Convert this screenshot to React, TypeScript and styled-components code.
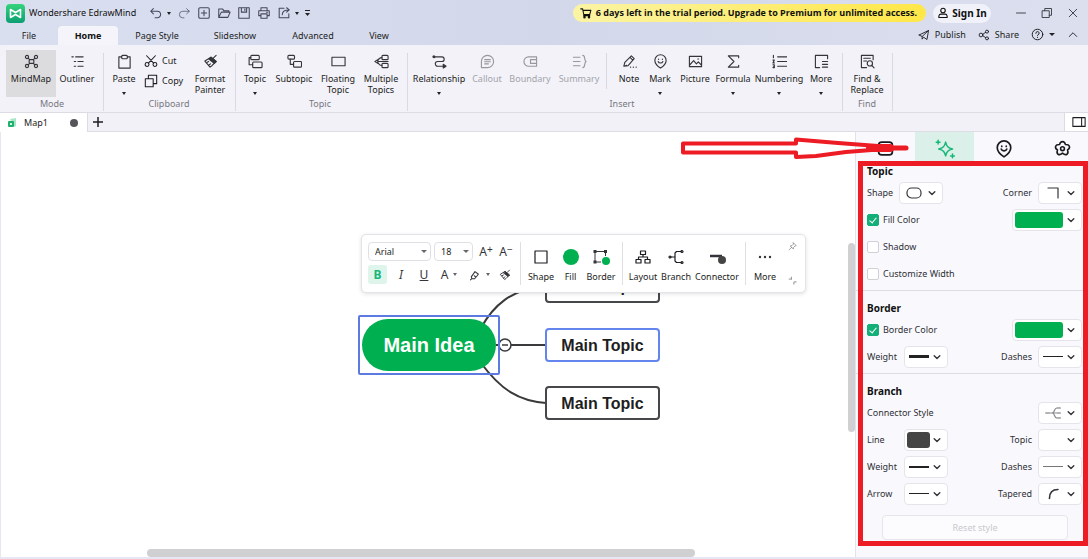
import React from "react";
import styled, { createGlobalStyle, css } from "styled-components";

const INK = "#34353b";
const GREEN = "#00b050";
const UI_FONT = '"Noto Sans", "Open Sans", sans-serif';

const GlobalStyle = createGlobalStyle`
  *, *::before, *::after { box-sizing: border-box; }
  body { margin: 0; background: #f1f1f7; }
  button, select, input { font: inherit; color: inherit; margin: 0; }
  button { border: 0; padding: 0; background: none; cursor: pointer; }
`;

/* ---------- icons ---------- */

const Svg = styled.svg<{ $w: number }>`
  display: block;
  flex: none;
  fill: none;
  stroke: currentColor;
  stroke-linecap: round;
  stroke-linejoin: round;
  stroke-width: ${(p) => p.$w};
`;

const shapes: Record<string, React.ReactNode> = {
  undo: <path d="M5 3 2 6l3 3M2 6h7.500a3.500 3.500 0 0 1 0 7.500H7" />,
  redo: <path d="M11 3l3 3-3 3M14 6H6.500a3.500 3.500 0 0 0 0 7.500H8" />,
  add: <><rect x="2" y="2" width="12" height="12" rx="1.500" /><path d="M8 5v6M5 8h6" /></>,
  open: <path d="M2 13V3.500h4.500L8 5.500h5.500V7M2 13h10.500L15 7H5L2 13z" />,
  save: <path d="M2 2h12v12H2zM5 2v5h6V2M9 3.500v1.500" />,
  print: <path d="M4.500 5V2h7v3M4 11H2V5.500h12V11h-2M4.500 9h7v5h-7zM11 7.200h1" />,
  export: <path d="M8 2.500H2.500v11h11V9M6 10c0-4 2.500-5.500 7.500-5.500M11 2l3 2.500-3 2.500" />,
  cart: <><path d="M1 2.500h2.500L5 10h8l1.500-5.500H4M5 10v1.500h8" /><circle cx="6" cy="13.500" r="1" /><circle cx="12" cy="13.500" r="1" /></>,
  user: <><circle cx="8" cy="4.700" r="3" /><path d="M2.500 14v-2a3 3 0 0 1 3-2.500h5a3 3 0 0 1 3 2.500v2z" /></>,
  min: <path d="M2 8h12" />,
  restore: <path d="M2 5h9v9H2zM5 5V2h9v9h-3" />,
  close: <path d="M3 3l10 10M13 3 3 13" />,
  publish: <path d="M1.500 8 14 2l-2 12-4.500-3-2 2.500V10L14 2M1.500 8l4 2" />,
  share: <><circle cx="4" cy="8" r="2.500" /><circle cx="12" cy="3.500" r="2" /><circle cx="12" cy="12.500" r="2" /><path d="M6.300 7 10.200 4.500M6.300 9l4 2.500" /></>,
  help: <><circle cx="8" cy="8" r="6.500" /><path d="M6 6.500a2 2 0 1 1 2.700 1.800c-.5.200-.7.500-.7 1.200M8 11.500v.2" /></>,
  up: <path d="M3 10l5-5 5 5" />,
  down: <path d="M3.500 6 8 10.500 12.500 6" />,
  mindmap: <><rect x="5.500" y="6" width="5" height="4" rx="1" /><circle cx="3.200" cy="3.200" r="1.700" /><circle cx="12.800" cy="3.200" r="1.700" /><circle cx="3.200" cy="12.800" r="1.700" /><circle cx="12.800" cy="12.800" r="1.700" /><path d="M4.500 4.500 6 6M11.500 4.500 10 6M4.500 11.500 6 10M11.500 11.500 10 10" /></>,
  outliner: <path d="M2 3h1.500M6 3h8M4.500 8H6M8.500 8H14M4.500 13H6M8.500 13H14" />,
  paste: <><path d="M5 3H2v12h12V3h-3" /><rect x="5" y="1.500" width="6" height="3.500" rx="1" /></>,
  cut: <><circle cx="3.500" cy="12" r="2.200" /><circle cx="12.500" cy="12" r="2.200" /><path d="M5 10.500 13 2M11 10.500 3 2" /></>,
  copy: <path d="M1.500 5.500h9v9h-9zM5 5.500v-4h9.500V11h-4" />,
  painter: <><path d="M2 7.500 7.500 14l2-1.500L14 8 8.500 3.500z" /><path d="M8.500 3.500 14 8l-2 2-5.800-4.600zM11 4.500 14 1.500M4 9l2-1M6 12l2-1.500" fill="currentColor" /></>,
  topic: <><rect x="3" y="1.500" width="9" height="4.500" rx="1" /><rect x="5" y="8.500" width="10" height="6" rx="1" /><path d="M3 3.800H1.200v7.700H5" /></>,
  subtopic: <><rect x="1" y="1.500" width="7" height="4" rx="1" /><rect x="7" y="8" width="8.500" height="6" rx="1" /><path d="M3.500 5.500V11H7" /></>,
  rect: <rect x="1" y="3.500" width="14" height="9" />,
  multiple: <><rect x="8.500" y="1.500" width="6.500" height="4.500" rx="1" /><rect x="8.500" y="10" width="6.500" height="4.500" rx="1" /><path d="M1 8l3-2v4zM4 8h11M4.500 6.500C5.500 4 6.500 3.800 8.500 3.800M4.500 9.500c1 2.500 2 2.700 4 2.700" /></>,
  relation: <><path d="M2 3h8.500a2.500 2.500 0 0 1 0 5H6a2.500 2.500 0 0 0 0 5h7.500" /><circle cx="2" cy="3" r="1" fill="currentColor" /><path d="M12 11l3 2-3 2z" fill="currentColor" /></>,
  callout: <path d="M1.500 14.500V8A6.500 6.500 0 1 1 8 14.500zM5 6h6M5 8.200h6M5 10.500h4" />,
  boundary: <path d="M14.500 3H6a5 5 0 0 0 0 10h8.500zM8 6h6.500M8 6v4h6.500" />,
  summary: <path d="M1.500 3.500h7M1.500 8h7M1.500 12.500h7M11.500 1.500c3 0 1 5 3.500 6.500-2.500 1.500-.5 6.500-3.500 6.500" />,
  note: <path d="M2 13l1-4 7-7 3 3-6.500 7.500zM8.500 3.500l3 3M2 13l3-1M9 14h.2M12 14h.2M15 14h.2" />,
  mark: <><path d="M8 15S2 11 2 6.800a6 6 0 0 1 12 0C14 11 8 15 8 15z" /><path d="M5.500 8c.8 2.200 4.200 2.200 5 0M6 5.500v.3M10 5.500v.3" /></>,
  picture: <path d="M1.500 2.500h13v11h-13zM1.500 12l4.500-5 3 3.500 2-2 3.500 3.500M10.500 5.300h.8" />,
  formula: <path d="M13.500 4V2h-11l6 6-6 6h11v-2" />,
  numbering: <path d="M6 3h10M6 8h10M6 13h10M1.500 1.500V4M1 6.500h1.500L1 9.500h1.500M1 11.500h1.500v3H1M1.500 13h1" />,
  more: <path d="M14.500 5V1.500h-13v13H6M9 8h5.500M9 11h5.500M9 14h5.500" />,
  find: <><path d="M14 6V1.500H1.500v13H7M4 4.500h7M4 7.500h3" /><circle cx="10.500" cy="10" r="2.800" /><path d="M12.600 12.200 15 14.800" /></>,
  panel: <path d="M1 3h14v10H1zM11 3v10" />,
  roundbox: <rect x="1.500" y="2" width="13" height="12" rx="3" />,
  sparkle: <path d="M8.500 2.500c.8 3.500 2 4.700 5.500 5.500-3.500.8-4.700 2-5.500 5.500C7.700 10 6.500 8.800 3 8c3.500-.8 4.700-2 5.500-5.500zM2.500 1v3M1 2.500h3M14 12v3M12.500 13.500h3" />,
  flower: <><path d="M8 1.500c1.700 0 2.400 1.200 2.700 2.700 1.500 0 3.300.2 3.800 1.800.5 1.700-.5 2.600-1.800 3.400.6 1.500.9 3-.5 4-1.500 1-2.800.2-4.200-1-1.400 1.200-2.700 2-4.200 1-1.400-1-1.100-2.500-.5-4C2 8.600 1 7.700 1.500 6c.5-1.600 2.300-1.800 3.800-1.800C5.600 2.700 6.300 1.500 8 1.500z" /><circle cx="8" cy="8.200" r="1.800" /></>,
  square: <rect x="2" y="2" width="12" height="12" />,
  layout: <path d="M5.500 2h5v3.500h-5zM1 10.500h5V14H1zM10 10.500h5V14h-5zM8 5.500V8M3.500 10.500V8h9v2.500" />,
  branch: <><path d="M2.500 8H7M13 2.500H8.500L7 4v8l1.500 1.500H13" /><circle cx="2" cy="8" r="1" /><circle cx="14" cy="2.500" r="1" /><circle cx="14" cy="13.500" r="1" /></>,
  highlight: <path d="M3 10.500 8 3.500l4.500 3.500-5 6L4 13zM2 14.500l2-2M7 9l2 1.500" />,
  pin: <path d="M9.500 1.500l5 5-2 .5-2.500 2.500-.5 3L4 7l3-.5L9.500 4zM6.500 9.500 2 14" />,
  collapse: <path d="M2 5.500h4M6 5.500V2M10.500 14.500v-4h4" />,
  ellipseShape: <rect x="1" y="3" width="14" height="10" rx="4.500" />,
  corner: <path d="M3 3h10v10" />,
  tree: <><path d="M4 8h11M15 3h-3C8.500 3 10.500 8 7 8c3.500 0 1.500 5 5 5h3" stroke="#8a8a90" /><path d="M1 8h3M12.500 3H15M12.500 8H15M12.500 13H15" strokeWidth="2" stroke="#b4b4b8" /></>,
  taper: <path d="M3 14C3 7 6.500 3 13.500 3" />,
};

function Icon({ name, size = 15, w = 1.2 }: { name: string; size?: number; w?: number }) {
  return (
    <Svg viewBox="0 0 16 16" width={size} height={size} $w={w} aria-hidden="true">
      {shapes[name]}
    </Svg>
  );
}

const Caret = styled.span`
  flex: none;
  border: 3px solid transparent;
  border-top-color: #222;
  border-bottom: 0;
`;

/* ---------- window frame ---------- */

const Window = styled.div`
  min-height: 100vh;
  display: flex;
  flex-direction: column;
  font: 9px/12px ${UI_FONT};
  color: #1c1d22;
  background: #f1f1f7;
`;

const Header = styled.header`
  background: linear-gradient(90deg, #dadff0, #d2d8ea 50%, #dcdfee);
`;

const TitleBar = styled.div`
  display: flex;
  align-items: center;
  height: 26px;
  padding: 0 9px 0 6px;
`;

const AppName = styled.span`
  width: 113px;
  margin-left: 4px;
  white-space: nowrap;
  color: #111;
`;

const QuickTools = styled.div`
  display: flex;
  align-items: center;
  gap: 6px;
  margin-left: 7px;
  color: #44475a;
`;

const QuickButton = styled.button`
  display: flex;
  align-items: center;
  gap: 4px;

  ${Caret} { border-width: 3px 2px 0; }
`;

const Banner = styled.a`
  display: flex;
  align-items: center;
  gap: 4px;
  height: 18px;
  margin-left: auto;
  padding: 0 9px 0 7px;
  border-radius: 9px;
  background: linear-gradient(90deg, #fbf4a4, #ffe748);
  color: #111;
  font-family: "Open Sans", sans-serif;
  font-weight: 700;
  text-decoration: none;
  white-space: nowrap;
`;

const SignIn = styled.button`
  display: flex;
  align-items: center;
  justify-content: center;
  gap: 3px;
  width: 58px;
  height: 19px;
  margin: 0 24px 0 7px;
  border-radius: 10px;
  background: #f0f1f9;
  color: #111;
  font-size: 10px;
  font-weight: 700;
`;

const WindowButtons = styled.div`
  display: flex;
  gap: 14px;
  color: #33353e;
`;

const MenuBar = styled.nav`
  display: flex;
  height: 19px;
`;

const MenuTab = styled.button<{ $width: number; $active?: boolean }>`
  width: ${(p) => p.$width}px;
  border-radius: 4px 4px 0 0;
  ${(p) =>
    p.$active &&
    css`
      background: #f4f4fa;
      color: #111;
      font-weight: 700;
    `}
`;

const MenuActions = styled.div`
  display: flex;
  align-items: center;
  gap: 12px;
  margin-left: auto;
  padding: 0 9px 2px 0;
`;

const MenuAction = styled.button`
  display: flex;
  align-items: center;
  gap: 5px;
`;

/* ---------- ribbon ---------- */

const Ribbon = styled.div`
  display: flex;
  height: 68px;
  border-bottom: 1px solid #dcdce4;
  background: #f2f2f8;
`;

const Group = styled.section<{ $pad: string }>`
  position: relative;
  display: flex;
  flex-direction: column;
  padding: ${(p) => p.$pad};

  &::after {
    content: "";
    position: absolute;
    right: 0;
    top: 8px;
    bottom: 1px;
    width: 1px;
    background: #d9d9e1;
  }
`;

const GroupRow = styled.div`
  display: flex;
  height: 47px;
  margin-top: 5px;
`;

const GroupTitle = styled.h2`
  margin: 0;
  font-size: 9px;
  line-height: 13px;
  font-weight: 400;
  text-align: center;
  color: #77787f;
`;

const Tool = styled.button<{ $width: number; $active?: boolean; $off?: boolean }>`
  display: flex;
  flex-direction: column;
  align-items: center;
  width: ${(p) => p.$width}px;
  padding-top: 4px;
  line-height: 11px;
  white-space: nowrap;
  color: ${(p) => (p.$off ? "#a3a4aa" : "#1c1d22")};
  background: ${(p) => (p.$active ? "#dcdcde" : "none")};

  svg { margin-bottom: 4px; color: ${(p) => (p.$off ? "#97989e" : INK)}; }
  ${Caret} { margin-top: 8px; border-width: 3px 2px 0; }
`;

const ToolStack = styled.div`
  display: flex;
  flex-direction: column;
  gap: 6px;
  width: 52px;
  padding: 4px 0 0 5px;
`;

const SmallTool = styled.button`
  display: flex;
  align-items: center;
  gap: 4px;
`;

const Divider = styled.span`
  width: 1px;
  height: 36px;
  margin: 3px 5px 0 2px;
  background: #d9d9e1;
`;

/* ---------- document tabs ---------- */

const DocTabs = styled.div`
  display: flex;
  align-items: stretch;
  height: 19px;
  border-bottom: 1px solid #dcdce4;
`;

const DocTab = styled.button`
  display: flex;
  align-items: center;
  width: 88px;
  margin-bottom: -1px;
  padding: 0 9px 0 7px;
  gap: 7px;
  background: #fff;
  border-right: 1px solid #dcdce4;
`;

const Dot = styled.span`
  width: 8px;
  height: 8px;
  margin-left: auto;
  border-radius: 50%;
  background: #55565b;
`;

const AddDoc = styled.button`
  width: 20px;
  display: flex;
  align-items: center;
  justify-content: center;
`;

const PanelToggle = styled.button`
  display: flex;
  align-items: center;
  justify-content: center;
  width: 24px;
  margin-left: auto;
  padding-left: 4px;
  border-left: 1px solid #dcdce4;
  background: #fff;
`;

/* ---------- workspace ---------- */

const Workspace = styled.main`
  position: relative;
  flex: 1;
  display: flex;
  border-bottom: 2px solid #e6e7f2;
`;

const Canvas = styled.section`
  position: relative;
  flex: 1;
  min-width: 0;
  overflow: hidden;
  background: #fff;
  border-left: 1px solid #e6e7f0;
`;

const Links = styled.svg`
  position: absolute;
  left: 0;
  top: 0;
`;

const Node = styled.div<{ $x: number; $y: number; $selected?: boolean }>`
  position: absolute;
  left: ${(p) => p.$x}px;
  top: ${(p) => p.$y}px;
  width: 115px;
  height: 34px;
  border: 2px solid ${(p) => (p.$selected ? "#6484ee" : "#46474a")};
  border-radius: 4px;
  background: #fff;
  color: #1e1e1e;
  font: 700 16px/31px "Liberation Sans", sans-serif;
  text-align: center;
`;

const Selection = styled.div`
  position: absolute;
  left: 357px;
  top: 183px;
  padding: 2px;
  border: 2px solid #5c7ae0;
  border-radius: 2px;
`;

const MainNode = styled.div`
  width: 134px;
  height: 52px;
  border-radius: 26px;
  background: ${GREEN};
  color: #fff;
  font: 700 20px/52px "Liberation Sans", sans-serif;
  text-align: center;
`;

const VScroll = styled.span`
  position: absolute;
  right: 0;
  top: 111px;
  width: 7px;
  height: 189px;
  border-radius: 4px;
  background: #d0d0d2;
`;

const HScroll = styled(VScroll)`
  right: auto;
  left: 146px;
  top: auto;
  bottom: 0;
  width: 548px;
  height: 8px;
`;

/* ---------- floating format bar ---------- */

const FormatBar = styled.div`
  position: absolute;
  left: 360px;
  top: 102px;
  display: flex;
  height: 59px;
  width: 445px;
  padding: 7px 6px;
  border: 1px solid #e4e4e8;
  border-radius: 5px;
  background: #fff;
  box-shadow: 0 1px 4px rgba(0, 0, 0, 0.12);
`;

const TextTools = styled.div`
  display: flex;
  flex-direction: column;
  gap: 4px;
  width: 152px;
`;

const TextRow = styled.div`
  display: flex;
  align-items: center;
  height: 19px;
`;

const SelectBox = styled.label<{ $width: number }>`
  position: relative;
  display: flex;
  width: ${(p) => p.$width}px;
  margin-right: 3px;

  select {
    width: 100%;
    height: 19px;
    padding: 0 6px;
    appearance: none;
    border: 1px solid #e0e0e4;
    border-radius: 4px;
    background: #fff;
  }
  ${Caret} {
    position: absolute;
    right: 4px;
    top: 8px;
    border-top-color: #66676c;
  }
`;

const TextButton = styled.button<{ $width: number; $active?: boolean }>`
  display: flex;
  align-items: center;
  justify-content: center;
  gap: 5px;
  width: ${(p) => p.$width}px;
  height: 19px;
  border-radius: 3px;
  font-size: 12px;
  color: ${(p) => (p.$active ? "#18b87a" : INK)};
  background: ${(p) => (p.$active ? "#dff5ec" : "none")};

  sup { font-size: 10px; line-height: 8px; margin: -6px 0 0 -5px; }
  ${Caret} { border-width: 3px 2px 0; border-top-color: #66676c; }
`;

const BarTools = styled.div`
  display: flex;
  padding-top: 7px;
  border-left: 1px solid #dedee3;
`;

const BarTool = styled.button<{ $width: number }>`
  display: flex;
  flex-direction: column;
  align-items: center;
  gap: 6px;
  width: ${(p) => p.$width}px;
  height: 36px;
  white-space: nowrap;
`;

const BarCorner = styled.div`
  display: flex;
  flex-direction: column;
  justify-content: space-between;
  margin-left: auto;
  padding: 0 2px 0 0;
  color: #77787f;
`;

/* ---------- style panel ---------- */

const Panel = styled.aside`
  width: 233px;
  flex: none;
  background: #f9f9fd;
  border-left: 1px solid #e2e2ea;
`;

const PanelTabs = styled.div`
  display: grid;
  grid-template-columns: repeat(4, 59px);
  height: 31px;
  overflow: hidden;
`;

const PanelTab = styled.button<{ $active?: boolean }>`
  display: flex;
  align-items: center;
  justify-content: center;
  padding-top: 2px;
  color: ${(p) => (p.$active ? "#16b777" : "#1b1b1d")};
  background: ${(p) => (p.$active ? "#daf0e9" : "none")};
`;

const Section = styled.section`
  padding: 0 6px 3px 11px;

  & + & {
    padding-top: 9px;
    border-top: 1px solid #dcdce2;
  }
`;

const SectionTitle = styled.h3`
  margin: 0;
  font-size: 10px;
  line-height: 16px;
  font-weight: 700;
  color: #111;
`;

const Row = styled.div`
  display: flex;
  align-items: center;
  height: 27px;
  color: #2f3035;
`;

const Field = styled.label<{ $end?: boolean; $name?: number }>`
  display: flex;
  align-items: center;
  margin-left: ${(p) => (p.$end ? "auto" : "0")};
  gap: 6px;

  & > span { min-width: ${(p) => p.$name ?? 0}px; }
`;

const Picker = styled.button<{ $width?: number }>`
  display: flex;
  align-items: center;
  justify-content: space-between;
  width: ${(p) => p.$width ?? 44}px;
  height: 22px;
  padding: 0 5px 0 4px;
  border: 1px solid #e4e4ea;
  border-radius: 4px;
  background: #fff;
  color: #33343a;
`;

const Swatch = styled.span<{ $width: number; $color: string }>`
  width: ${(p) => p.$width}px;
  height: 16px;
  margin-left: -2px;
  border-radius: 3px;
  background: ${(p) => p.$color};
`;

const Stroke = styled.span<{ $h: number; $color?: string }>`
  width: 20px;
  height: ${(p) => p.$h}px;
  background: ${(p) => p.$color ?? "#222"};
`;

const Preview = styled.span`
  width: 20px;
  display: flex;
  justify-content: center;
`;

const Check = styled.label`
  display: flex;
  align-items: center;
  gap: 4px;

  input {
    position: relative;
    appearance: none;
    width: 12px;
    height: 12px;
    border: 1px solid #d0d0d6;
    border-radius: 2px;
    background: #fff;
  }
  input:checked { background: #14ae78; border-color: #14ae78; }
  input:checked::after {
    content: "";
    position: absolute;
    left: 3px;
    top: 1px;
    width: 4px;
    height: 7px;
    border: solid #fff;
    border-width: 0 1px 1px 0;
    transform: rotate(40deg);
  }
`;

const Reset = styled.button`
  display: block;
  width: 186px;
  height: 25px;
  margin: 8px 0 0 15px;
  border: 1px solid #e6e6ea;
  border-radius: 4px;
  background: #fcfcfe;
  color: #c9c9cd;
`;

/* ---------- red call-out marks ---------- */

const RedFrame = styled.span`
  position: absolute;
  right: 0;
  top: 29px;
  width: 230px;
  height: 385px;
  border: 5px solid #ed1c24;
  pointer-events: none;
`;

const RedArrow = styled.svg`
  position: absolute;
  right: 178px;
  top: 4px;
  pointer-events: none;
`;

/* ---------- data ---------- */

type ToolSpec = { icon: string; label: string; width: number; caret?: boolean; off?: boolean; active?: boolean };

const topicTools: ToolSpec[] = [
  { icon: "topic", label: "Topic", width: 34, caret: true },
  { icon: "subtopic", label: "Subtopic", width: 44 },
  { icon: "rect", label: "Floating\nTopic", width: 44 },
  { icon: "multiple", label: "Multiple\nTopics", width: 42 },
];

const linkTools: ToolSpec[] = [
  { icon: "relation", label: "Relationship", width: 58, caret: true },
  { icon: "callout", label: "Callout", width: 38, off: true },
  { icon: "boundary", label: "Boundary", width: 48, off: true },
  { icon: "summary", label: "Summary", width: 50, off: true },
];

const insertTools: ToolSpec[] = [
  { icon: "note", label: "Note", width: 34 },
  { icon: "mark", label: "Mark", width: 28, caret: true },
  { icon: "picture", label: "Picture", width: 42 },
  { icon: "formula", label: "Formula", width: 34, caret: true },
  { icon: "numbering", label: "Numbering", width: 58, caret: true },
  { icon: "more", label: "More", width: 26, caret: true },
];

const RibbonTool = ({ icon, label, width, caret, off, active }: ToolSpec) => (
  <Tool $width={width} $off={off} $active={active} disabled={off}>
    <Icon name={icon} />
    {label.split("\n").map((line) => (
      <span key={line}>{line}</span>
    ))}
    {caret && <Caret />}
  </Tool>
);

const PickerButton = ({ label, width, children }: { label: string; width?: number; children?: React.ReactNode }) => (
  <Picker $width={width} aria-label={label} aria-haspopup="listbox">
    {children ?? <Preview />}
    <Icon name="down" size={10} w={2.2} />
  </Picker>
);

const Pic = ({ name, size = 16, w = 1.2 }: { name: string; size?: number; w?: number }) => (
  <Preview>
    <Icon name={name} size={size} w={w} />
  </Preview>
);

export default function App() {
  return (
    <Window>
      <GlobalStyle />
      <Header>
        <TitleBar>
          <svg width="19" height="19" viewBox="0 0 19 19" aria-hidden="true">
            <defs>
              <linearGradient id="logo" x1="0" y1="0" x2="0" y2="1">
                <stop offset="0" stopColor="#35d37c" />
                <stop offset="1" stopColor="#0c9f72" />
              </linearGradient>
            </defs>
            <rect width="19" height="19" rx="4" fill="url(#logo)" />
            <path d="M4.500 5.500v8l5-3 5 3v-8l-5 3z" fill="none" stroke="#fff" strokeWidth="1.600" strokeLinejoin="round" />
          </svg>
          <AppName>Wondershare EdrawMind</AppName>
          <QuickTools>
            <QuickButton aria-label="Undo"><Icon name="undo" size={14} /><Caret /></QuickButton>
            <QuickButton aria-label="Redo"><Icon name="redo" size={14} w={0.8} /></QuickButton>
            <QuickButton aria-label="New"><Icon name="add" size={14} /></QuickButton>
            <QuickButton aria-label="Open"><Icon name="open" size={14} /></QuickButton>
            <QuickButton aria-label="Save"><Icon name="save" size={14} /></QuickButton>
            <QuickButton aria-label="Print"><Icon name="print" size={14} /></QuickButton>
            <QuickButton aria-label="Export"><Icon name="export" size={14} /><Caret /></QuickButton>
            <QuickButton aria-label="Customize">
              <svg width="5" height="6" viewBox="0 0 5 6" aria-hidden="true">
                <path d="M0 .5h5" stroke="#222" />
                <path d="M0 3h5L2.500 6z" fill="#222" />
              </svg>
            </QuickButton>
          </QuickTools>
          <Banner href="#upgrade">
            <Icon name="cart" size={12} w={1.4} />
            6 days left in the trial period. Upgrade to Premium for unlimited access.
          </Banner>
          <SignIn><Icon name="user" size={12} w={1.5} />Sign In</SignIn>
          <WindowButtons>
            <button aria-label="Minimize"><Icon name="min" size={12} /></button>
            <button aria-label="Restore"><Icon name="restore" size={12} /></button>
            <button aria-label="Close"><Icon name="close" size={12} /></button>
          </WindowButtons>
        </TitleBar>
        <MenuBar>
          <MenuTab $width={58}>File</MenuTab>
          <MenuTab $width={60} $active>Home</MenuTab>
          <MenuTab $width={78}>Page Style</MenuTab>
          <MenuTab $width={78}>Slideshow</MenuTab>
          <MenuTab $width={78}>Advanced</MenuTab>
          <MenuTab $width={54}>View</MenuTab>
          <MenuActions>
            <MenuAction><Icon name="publish" size={12} />Publish</MenuAction>
            <MenuAction><Icon name="share" size={12} />Share</MenuAction>
            <MenuAction aria-label="Help"><Icon name="help" size={13} /><Caret /></MenuAction>
            <MenuAction aria-label="Collapse ribbon"><Icon name="up" size={12} /></MenuAction>
          </MenuActions>
        </MenuBar>
      </Header>

      <Ribbon>
        <Group $pad="0 6px 0 6px">
          <GroupRow>
            <RibbonTool icon="mindmap" label="MindMap" width={50} active />
            <RibbonTool icon="outliner" label="Outliner" width={42} />
          </GroupRow>
          <GroupTitle>Mode</GroupTitle>
        </Group>
        <Group $pad="0 7px 0 5px">
          <GroupRow>
            <RibbonTool icon="paste" label="Paste" width={30} caret />
            <ToolStack>
              <SmallTool><Icon name="cut" size={14} />Cut</SmallTool>
              <SmallTool><Icon name="copy" size={14} />Copy</SmallTool>
            </ToolStack>
            <RibbonTool icon="painter" label={"Format\nPainter"} width={38} />
          </GroupRow>
          <GroupTitle>Clipboard</GroupTitle>
        </Group>
        <Group $pad="0 6px 0 2px">
          <GroupRow>{topicTools.map((t) => <RibbonTool key={t.icon} {...t} />)}</GroupRow>
          <GroupTitle>Topic</GroupTitle>
        </Group>
        <Group $pad="0 9px 0 2px">
          <GroupRow>
            {linkTools.map((t) => <RibbonTool key={t.icon} {...t} />)}
            <Divider />
            {insertTools.map((t) => <RibbonTool key={t.icon} {...t} />)}
          </GroupRow>
          <GroupTitle>Insert</GroupTitle>
        </Group>
        <Group $pad="0 2px 0 0">
          <GroupRow><RibbonTool icon="find" label={"Find &\nReplace"} width={48} /></GroupRow>
          <GroupTitle>Find</GroupTitle>
        </Group>
      </Ribbon>

      <DocTabs>
        <DocTab>
          <svg width="10" height="10" viewBox="0 0 10 10" aria-hidden="true">
            <path d="M3 1l6-1v8l-2 1z" fill="#a9e6c8" />
            <rect x="1" y="3" width="6" height="6" rx="1" fill="#20b26c" />
            <path d="M3 5h2v2H3z" fill="#d5f4e4" />
          </svg>
          Map1
          <Dot />
        </DocTab>
        <AddDoc aria-label="New document">
          <Svg width="10" height="10" viewBox="0 0 10 10" $w={1.5}><path d="M5 0v10M0 5h10" /></Svg>
        </AddDoc>
        <PanelToggle aria-label="Toggle panel"><Icon name="panel" size={14} /></PanelToggle>
      </DocTabs>

      <Workspace>
        <Canvas>
          <Links width="700" height="300" viewBox="0 0 700 300" fill="none" stroke="#3a3a3c" strokeWidth="2" aria-hidden="true">
            <path d="M480 196C492 174 510 157 544 154M495 213h50M480 231C500 258 518 269 545 271" />
            <circle cx="504" cy="213" r="6" fill="#fff" strokeWidth="1.500" />
            <path d="M501 213h6" strokeWidth="1.500" />
          </Links>
          <Node $x={544} $y={137}>Main Topic</Node>
          <Node $x={544} $y={196} $selected>Main Topic</Node>
          <Node $x={544} $y={254}>Main Topic</Node>
          <Selection><MainNode>Main Idea</MainNode></Selection>
          <FormatBar>
            <TextTools>
              <TextRow>
                <SelectBox $width={63}>
                  <select aria-label="Font"><option>Arial</option></select>
                  <Caret />
                </SelectBox>
                <SelectBox $width={39}>
                  <select aria-label="Font size"><option>18</option></select>
                  <Caret />
                </SelectBox>
                <TextButton $width={20} aria-label="Larger">A<sup>+</sup></TextButton>
                <TextButton $width={20} aria-label="Smaller">A<sup>−</sup></TextButton>
              </TextRow>
              <TextRow>
                <TextButton $width={19} $active><b>B</b></TextButton>
                <TextButton $width={28}><i>I</i></TextButton>
                <TextButton $width={18}><u>U</u></TextButton>
                <TextButton $width={32}>A<Caret /></TextButton>
                <TextButton $width={28} aria-label="Highlight"><Icon name="highlight" size={12} w={1.4} /><Caret /></TextButton>
                <TextButton $width={24} aria-label="Format painter"><Icon name="painter" size={12} /></TextButton>
              </TextRow>
            </TextTools>
            <BarTools>
              <BarTool $width={40}><Icon name="square" size={16} />Shape</BarTool>
              <BarTool $width={19}>
                <svg width="16" height="16" viewBox="0 0 16 16"><circle cx="8" cy="8" r="8" fill={GREEN} /></svg>
                Fill
              </BarTool>
              <BarTool $width={42}>
                <svg width="18" height="16" viewBox="0 0 18 16">
                  <path d="M3 2.500h10.500M3 2.500V13M3 13h6M13.500 2.500V7" stroke={INK} />
                  <path d="M1.500 1h3v3h-3zM12 1h3v3h-3zM1.500 11.500h3v3h-3z" fill={INK} />
                  <circle cx="14" cy="12" r="4" fill={GREEN} />
                </svg>
                Border
              </BarTool>
            </BarTools>
            <BarTools>
              <BarTool $width={40}><Icon name="layout" size={16} />Layout</BarTool>
              <BarTool $width={26}><Icon name="branch" size={16} />Branch</BarTool>
              <BarTool $width={56}>
                <svg width="18" height="16" viewBox="0 0 18 16">
                  <path d="M2 7h12" stroke={INK} strokeWidth="2.500" />
                  <circle cx="14" cy="11" r="4" fill="#444" />
                </svg>
                Connector
              </BarTool>
            </BarTools>
            <BarTools>
              <BarTool $width={38}>
                <svg width="16" height="16" viewBox="0 0 16 16" fill={INK}>
                  <circle cx="3" cy="8" r="1.200" /><circle cx="8" cy="8" r="1.200" /><circle cx="13" cy="8" r="1.200" />
                </svg>
                More
              </BarTool>
            </BarTools>
            <BarCorner>
              <button aria-label="Pin"><Icon name="pin" size={9} /></button>
              <button aria-label="Shrink"><Icon name="collapse" size={9} w={1.4} /></button>
            </BarCorner>
          </FormatBar>
          <VScroll />
          <HScroll />
        </Canvas>

        <Panel>
          <PanelTabs>
            <PanelTab aria-label="Layout"><Icon name="roundbox" size={17} w={1.6} /></PanelTab>
            <PanelTab aria-label="Style" $active><Icon name="sparkle" size={20} /></PanelTab>
            <PanelTab aria-label="Marks"><Icon name="mark" size={18} w={1.5} /></PanelTab>
            <PanelTab aria-label="Theme"><Icon name="flower" size={17} w={1.5} /></PanelTab>
          </PanelTabs>
          <Section>
            <SectionTitle>Topic</SectionTitle>
            <Row>
              <Field><span>Shape</span><PickerButton label="Shape"><Pic name="ellipseShape" /></PickerButton></Field>
              <Field $end><span>Corner</span><PickerButton label="Corner"><Pic name="corner" /></PickerButton></Field>
            </Row>
            <Row>
              <Check><input type="checkbox" defaultChecked />Fill Color</Check>
              <Field $end><PickerButton label="Fill color" width={70}><Swatch $width={48} $color={GREEN} /></PickerButton></Field>
            </Row>
            <Row><Check><input type="checkbox" />Shadow</Check></Row>
            <Row><Check><input type="checkbox" />Customize Width</Check></Row>
          </Section>
          <Section>
            <SectionTitle>Border</SectionTitle>
            <Row>
              <Check><input type="checkbox" defaultChecked />Border Color</Check>
              <Field $end><PickerButton label="Border color" width={70}><Swatch $width={48} $color={GREEN} /></PickerButton></Field>
            </Row>
            <Row>
              <Field $name={31}><span>Weight</span><PickerButton label="Border weight"><Stroke $h={3} /></PickerButton></Field>
              <Field $end><span>Dashes</span><PickerButton label="Border dashes"><Stroke $h={1} /></PickerButton></Field>
            </Row>
          </Section>
          <Section>
            <SectionTitle>Branch</SectionTitle>
            <Row>
              <Field><span>Connector Style</span></Field>
              <Field $end><PickerButton label="Connector style"><Pic name="tree" /></PickerButton></Field>
            </Row>
            <Row>
              <Field $name={31}><span>Line</span><PickerButton label="Line"><Swatch $width={23} $color="#444" /></PickerButton></Field>
              <Field $end><span>Topic</span><PickerButton label="Topic" /></Field>
            </Row>
            <Row>
              <Field $name={31}><span>Weight</span><PickerButton label="Branch weight"><Stroke $h={2} /></PickerButton></Field>
              <Field $end><span>Dashes</span><PickerButton label="Branch dashes"><Stroke $h={1} $color="#777" /></PickerButton></Field>
            </Row>
            <Row>
              <Field $name={31}><span>Arrow</span><PickerButton label="Arrow"><Stroke $h={1} /></PickerButton></Field>
              <Field $end><span>Tapered</span><PickerButton label="Tapered"><Pic name="taper" size={13} w={2} /></PickerButton></Field>
            </Row>
            <Reset disabled>Reset style</Reset>
          </Section>
        </Panel>

        <RedFrame />
        <RedArrow width="232" height="26" viewBox="0 0 232 26" fill="none" stroke="#ed1c24" strokeLinejoin="round" strokeLinecap="round" aria-hidden="true">
          <path d="M118 7.500H5v9h113v4.500l20-1 30-4 32-2.500M118 7.500V3.500l42 3.500 40 3" strokeWidth="4" />
          <path d="M192 12h20" strokeWidth="8" />
          <path d="M200 12h28" strokeWidth="5" />
        </RedArrow>
      </Workspace>
    </Window>
  );
}
